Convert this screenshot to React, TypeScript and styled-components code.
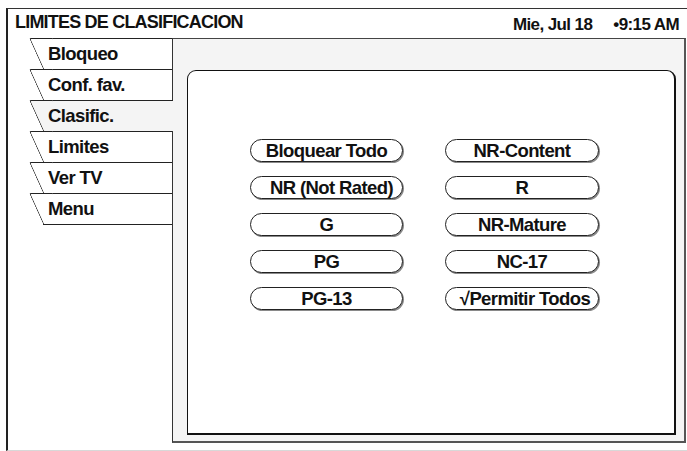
import React from "react";
import styled, { createGlobalStyle } from "styled-components";

const GlobalStyle = createGlobalStyle`
  html, body {
    margin: 0;
    padding: 0;
    background: #ffffff;
  }
  body {
    font-family: "Liberation Sans", Arial, sans-serif;
    color: #111;
  }
`;

const Frame = styled.div`
  box-sizing: border-box;
  margin: 8px 0 0 6px;
  width: 681px;
  height: 443px;
  border-top: 1px solid #333;
  border-left: 2px solid #222;
  border-bottom: 1px solid #d8d8d8;
  display: flex;
  flex-direction: column;
`;

const Header = styled.div`
  height: 29px;
  box-sizing: border-box;
  padding: 3px 8px 0 7px;
  display: flex;
  justify-content: space-between;
  align-items: flex-start;
  font-weight: bold;
`;

const Title = styled.div`
  font-size: 18px;
  letter-spacing: -0.8px;
`;

const Clock = styled.div`
  font-size: 17px;
  letter-spacing: -0.6px;
  padding-top: 3px;
  display: flex;
`;

const Time = styled.span`
  margin-left: 21px;
`;

const Body = styled.div`
  flex: 1;
  display: flex;
  align-items: flex-start;
`;

const TabList = styled.div`
  width: 164px;
  flex-shrink: 0;
  display: flex;
  flex-direction: column;
`;

const Tab = styled.div<{ $active?: boolean; $last?: boolean }>`
  position: relative;
  z-index: ${(p) => (p.$active ? 2 : 1)};
  box-sizing: border-box;
  height: ${(p) => (p.$last ? "32px" : "31px")};
  margin-left: 35px;
  margin-right: ${(p) => (p.$active ? "-1px" : "0")};
  padding-left: 5px;
  border-top: 1px solid #222;
  border-bottom: ${(p) => (p.$last ? "1px solid #222" : "none")};
  background: ${(p) => (p.$active ? "#f4f4f4" : "#ffffff")};
  font-size: 18.5px;
  letter-spacing: -0.6px;
  font-weight: bold;
  line-height: 29px;

  &::before {
    content: "";
    position: absolute;
    z-index: -1;
    top: -1px;
    bottom: 0;
    left: -14px;
    width: 22px;
    background: ${(p) => (p.$active ? "#f4f4f4" : "#ffffff")};
    border-top: 1px solid #222;
    border-left: 1px solid #222;
    border-top-left-radius: 2px;
    transform: skewX(24.3deg);
    transform-origin: top left;
  }
`;

const Panel = styled.div`
  box-sizing: border-box;
  width: 514px;
  height: 405px;
  background: #f4f4f4;
  border-top: 1px solid #444;
  border-left: 1px solid #333;
  border-right: 2px solid #555;
  border-bottom: 2px solid #555;
  padding: 31px 8px 6px 14px;
  display: flex;
`;

const Screen = styled.div`
  flex: 1;
  background: #ffffff;
  border: 1px solid #111;
  border-right-width: 2px;
  border-bottom-width: 2px;
  border-radius: 9px 9px 0 0;
  padding: 68px 0 0 62px;
  display: grid;
  grid-template-columns: 153px 154px;
  grid-auto-rows: 23px;
  column-gap: 42px;
  row-gap: 14px;
  align-content: start;
`;

const Pill = styled.div<{ $shift?: number }>`
  box-sizing: border-box;
  height: 23px;
  padding-left: ${(p) => p.$shift ?? 0}px;
  border: 1px solid #222;
  border-radius: 12px;
  box-shadow: 1px 1px 0 #8a8a8a;
  background: #ffffff;
  font-size: 18.5px;
  letter-spacing: -0.6px;
  font-weight: bold;
  line-height: 22px;
  text-align: center;
  white-space: nowrap;
  overflow: hidden;
`;

const tabs = ["Bloqueo", "Conf. fav.", "Clasific.", "Limites", "Ver TV", "Menu"];

const ratings: { label: string; shift?: number }[] = [
  { label: "Bloquear Todo" },
  { label: "NR-Content" },
  { label: "NR (Not Rated)", shift: 10 },
  { label: "R" },
  { label: "G" },
  { label: "NR-Mature" },
  { label: "PG" },
  { label: "NC-17" },
  { label: "PG-13" },
  { label: "\u221APermitir Todos", shift: 6 },
];

export default function App() {
  return (
    <>
      <GlobalStyle />
      <Frame>
        <Header>
          <Title>LIMITES DE CLASIFICACION</Title>
          <Clock>
            <span>Mie, Jul 18</span>
            <Time>•9:15 AM</Time>
          </Clock>
        </Header>
        <Body>
          <TabList>
            {tabs.map((t, i) => (
              <Tab key={t} $active={t === "Clasific."} $last={i === tabs.length - 1}>
                {t}
              </Tab>
            ))}
          </TabList>
          <Panel>
            <Screen>
              {ratings.map((r) => (
                <Pill key={r.label} $shift={r.shift}>
                  {r.label}
                </Pill>
              ))}
            </Screen>
          </Panel>
        </Body>
      </Frame>
    </>
  );
}
